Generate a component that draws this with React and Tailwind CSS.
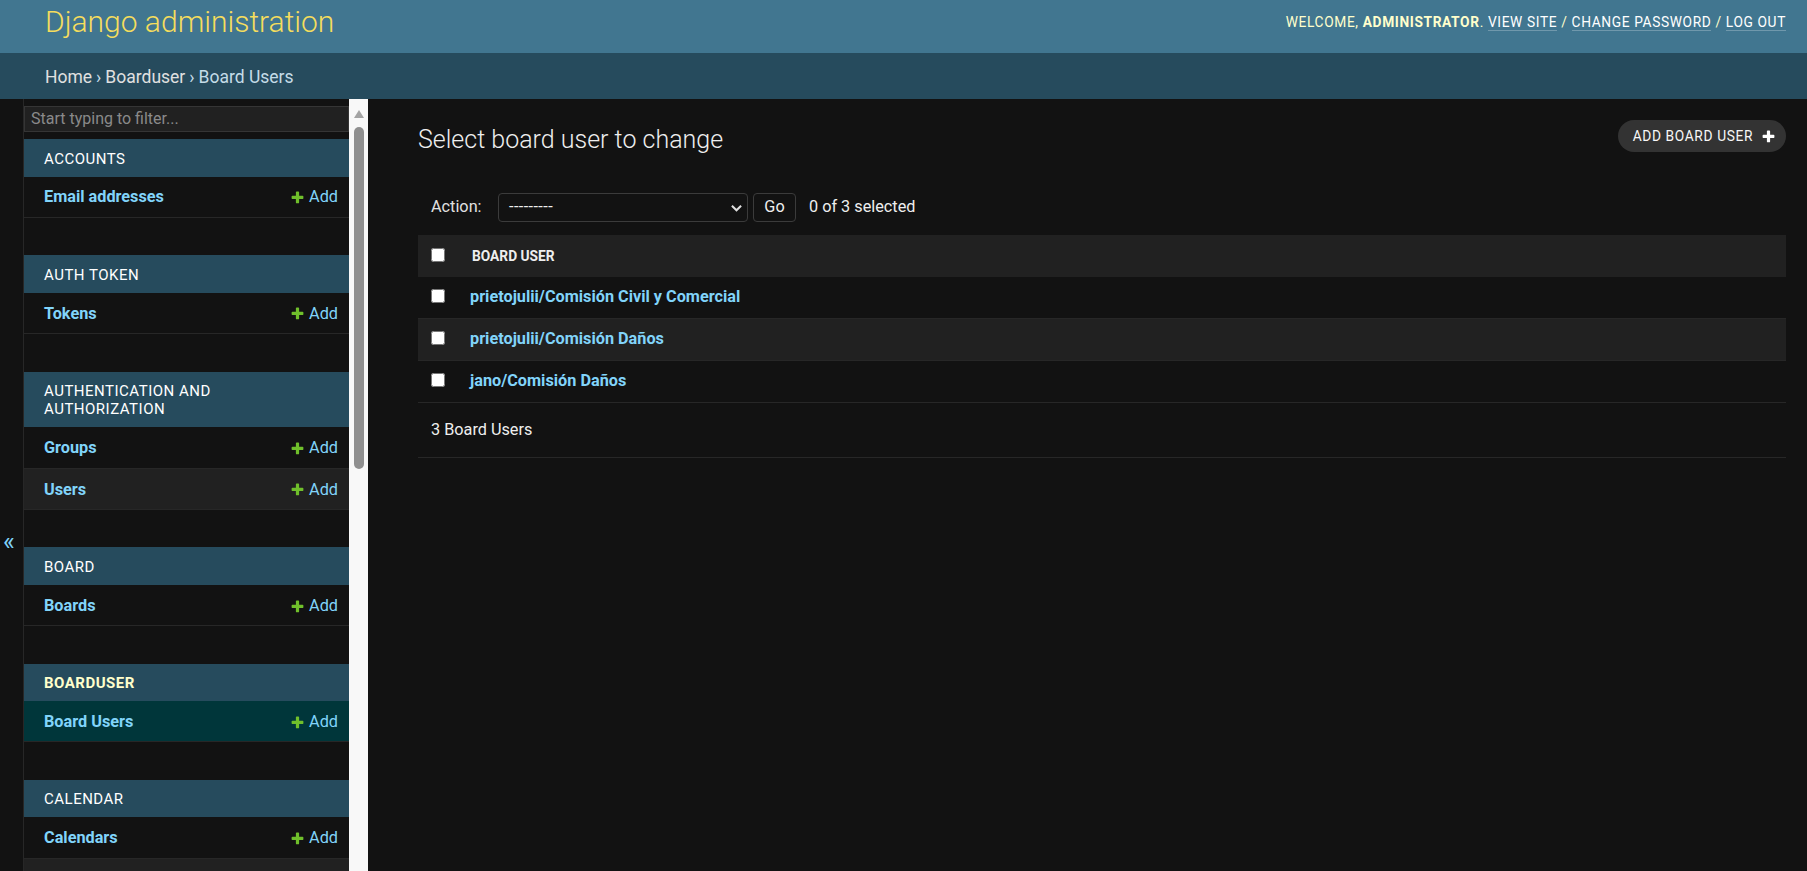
import React from "react";

const PlusIcon = ({ className }) => (
  <svg viewBox="0 0 1792 1792" className={className} aria-hidden="true">
    <path
      fill="currentColor"
      d="M1600 796v192q0 40-28 68t-68 28h-416v416q0 40-28 68t-68 28h-192q-40 0-68-28t-28-68v-416h-416q-40 0-68-28t-28-68v-192q0-40 28-68t68-28h416v-416q0-40 28-68t68-28h192q40 0 68 28t28 68v416h416q40 0 68 28t28 68z"
    />
  </svg>
);

const modules = [
  { name: "Accounts", models: ["Email addresses"] },
  { name: "Auth Token", models: ["Tokens"] },
  { name: ["Authentication and", "Authorization"], models: ["Groups", "Users"] },
  { name: "Board", models: ["Boards"] },
  { name: "Boarduser", models: ["Board Users"], current: true },
  { name: "Calendar", models: ["Calendars", ""] },
];

const rows = [
  "prietojulii/Comisión Civil y Comercial",
  "prietojulii/Comisión Daños",
  "jano/Comisión Daños",
];

function Checkbox() {
  return (
    <input
      type="checkbox"
      className="m-0 mb-[3px] w-[14px] h-[14px] shrink-0"
      readOnly
    />
  );
}

function SidebarModule({ mod }) {
  return (
    <div className="mb-[37.5px]">
      <div
        className={
          "bg-[#264b5d] pl-[20px] pr-[10px] pt-[10.5px] pb-[8.6px] leading-[18.4px] text-[15px] tracking-[0.5px] uppercase " +
          (mod.current ? "text-[#ffffcc] font-bold" : "text-[#ffffff]")
        }
      >
        {Array.isArray(mod.name) ? (
          <>
            {mod.name[0]}
            <br />
            {mod.name[1]}
          </>
        ) : (
          mod.name
        )}
      </div>
      {mod.models.map((m, i) => (
        <div
          key={i}
          className={
            "h-[41.25px] pt-[2px] border-b border-[#272727] flex items-center justify-between pl-[20px] pr-[11px] " +
            (mod.current
              ? "bg-[#00363a]"
              : i % 2 === 1
              ? "bg-[#212121]"
              : "")
          }
        >
          {m ? (
            <>
              <span className="text-[16.25px] font-bold text-[#81d4fa]">{m}</span>
              <span className="flex items-center gap-[4px] text-[16.25px] text-[#81d4fa]">
                <PlusIcon className="w-[15px] h-[15px] text-[#70bf2b]" />
                Add
              </span>
            </>
          ) : null}
        </div>
      ))}
    </div>
  );
}

export default function App() {
  return (
    <div className="h-screen overflow-hidden bg-[#121212] text-[#eeeeee] font-['Roboto','Liberation_Sans',sans-serif]">
      {/* Header */}
      <header className="h-[53px] bg-[#417690] flex items-center justify-between pl-[45px] pr-[21px] pb-[9px]">
        <div className="text-[30px] font-light text-[#f5dd5d] leading-[36px]">
          Django administration
        </div>
        <div className="text-[13.75px] tracking-[0.625px] uppercase text-[#ffffcc] leading-[17px]">
          Welcome, <strong className="font-bold">administrator</strong>.{" "}
          <a className="text-white border-b border-[rgba(255,255,255,0.25)]">View site</a> /{" "}
          <a className="text-white border-b border-[rgba(255,255,255,0.25)]">Change password</a> /{" "}
          <a className="text-white border-b border-[rgba(255,255,255,0.25)]">Log out</a>
        </div>
      </header>

      {/* Breadcrumbs */}
      <nav className="h-[46px] bg-[#264b5d] flex items-center pl-[45px] pt-[3px] text-[17.5px] text-[#c4dce8]">
        <a className="text-[#e0e0e0]">Home</a>
        <span className="mx-[4px]">›</span>
        <a className="text-[#e0e0e0]">Boarduser</a>
        <span className="mx-[4px]">›</span>
        <span>Board Users</span>
      </nav>

      <div className="flex h-[772px]">
        {/* Toggle column */}
        <div className="w-[24px] shrink-0 border-r border-[#272727] flex justify-start pl-[3px] pt-[428px]">
          <span className="text-[25px] leading-[30px] text-[#81d4fa]">«</span>
        </div>

        {/* Sidebar */}
        <aside className="w-[344px] shrink-0 flex overflow-hidden">
          <div className="w-[325px] shrink-0">
            <div className="mt-[7px] mb-[7px] h-[26px] border border-[#353535] bg-[#212121] flex items-center px-[6px]">
              <span className="text-[16px] text-[#8a8a8a]">Start typing to filter...</span>
            </div>
            {modules.map((mod, i) => (
              <SidebarModule key={i} mod={mod} />
            ))}
          </div>
          {/* fake scrollbar */}
          <div className="w-[19px] shrink-0 bg-[#f8f8f8] flex flex-col items-center">
            <svg viewBox="0 0 10 8" className="w-[10px] h-[8px] mt-[11px]">
              <path d="M5 0L10 8H0z" fill="#a3a3a3" />
            </svg>
            <div className="mt-[9px] w-[10px] h-[342px] rounded-full bg-[#8f8f8f]" />
          </div>
        </aside>

        {/* Main content */}
        <main className="flex-1 pl-[50px] pr-[21px] pt-[21px]">
          <div className="flex items-start justify-between h-[32px]">
            <h1 className="text-[25px] font-light text-[#eeeeee] leading-[30px] mt-[4.5px]">
              Select board user to change
            </h1>
            <div className="h-[32px] rounded-full bg-[#333333] flex items-center pl-[15px] pr-[10px] gap-[8px]">
              <span className="text-[13.75px] tracking-[0.625px] uppercase text-[#f7f7f7]">
                Add board user
              </span>
              <PlusIcon className="w-[15px] h-[15px] text-white" />
            </div>
          </div>

          {/* Actions */}
          <div className="mt-[41px] h-[29px] flex items-center pl-[13px] text-[16.25px] text-[#e0e0e0]">
            <span className="w-[67px] shrink-0">Action:</span>
            <div className="w-[250px] h-[29px] rounded-[4px] border border-[#3b3b3b] flex items-center justify-between pl-[10px] pr-[5px]">
              <span className="text-[#eeeeee] tracking-[0.4px]">---------</span>
              <svg viewBox="0 0 12 8" className="w-[11px] h-[8px]">
                <path d="M1 1.5l5 5 5-5" fill="none" stroke="#e0e0e0" strokeWidth="2.2" />
              </svg>
            </div>
            <div className="ml-[5px] w-[43px] h-[29px] rounded-[4px] border border-[#3b3b3b] flex items-center justify-center text-[#eeeeee]">
              Go
            </div>
            <span className="ml-[13px] text-[#eeeeee]">0 of 3 selected</span>
          </div>

          {/* Table */}
          <div className="mt-[13px]">
            <div className="h-[42px] bg-[#212121] flex items-center pl-[13px]">
              <Checkbox />
              <span className="ml-[27px] text-[13.75px] font-bold uppercase text-[#eeeeee]">
                Board user
              </span>
            </div>
            {rows.map((r, i) => (
              <div
                key={i}
                className={
                  "h-[42px] flex items-center pl-[13px] border-b border-[#272727] " +
                  (i % 2 === 1 ? "bg-[#212121]" : "")
                }
              >
                <Checkbox />
                <span className="ml-[25px] text-[16.25px] font-bold text-[#81d4fa]">{r}</span>
              </div>
            ))}
            <div className="h-[55px] flex items-center pl-[13px] border-b border-[#272727] text-[16.25px] text-[#eeeeee]">
              3 Board Users
            </div>
          </div>
        </main>
      </div>
    </div>
  );
}
